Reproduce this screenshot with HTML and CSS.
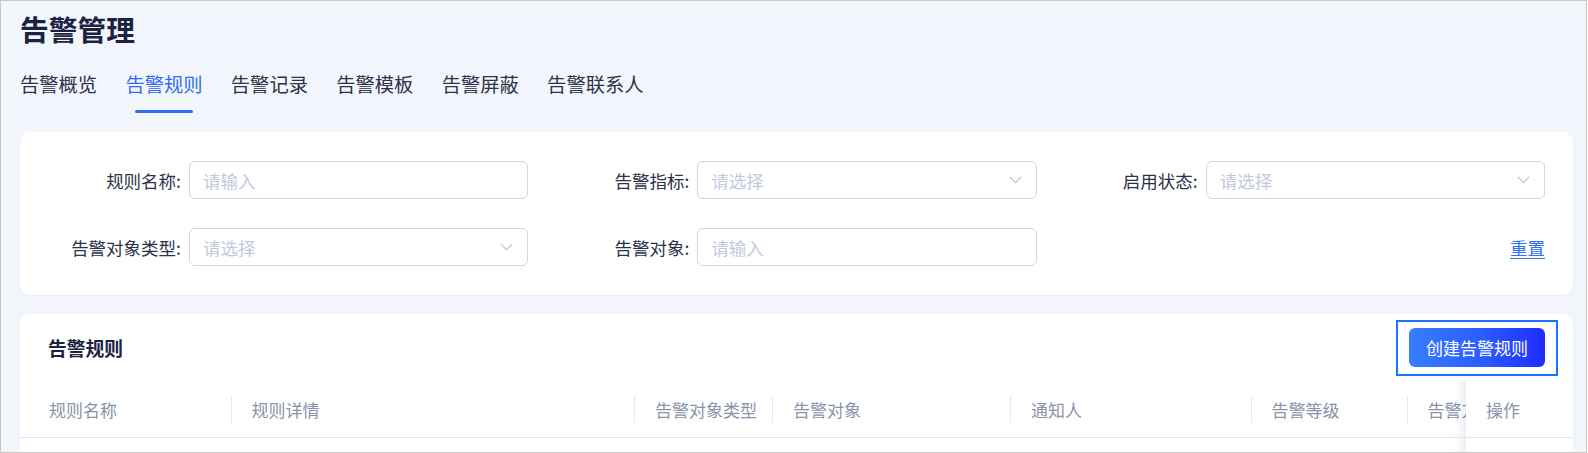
FILE: index.html
```html
<!DOCTYPE html>
<html lang="zh-CN">
<head>
<meta charset="utf-8">
<title>告警管理</title>
<link rel="stylesheet" href="styles.css">
</head>
<body>
<div class="app">
  <h1 class="page-title">告警管理</h1>

  <nav class="tabs">
    <span class="tab">告警概览</span>
    <span class="tab is-active">告警规则</span>
    <span class="tab">告警记录</span>
    <span class="tab">告警模板</span>
    <span class="tab">告警屏蔽</span>
    <span class="tab">告警联系人</span>
  </nav>

  <section class="card filter-card">
    <div class="field">
      <label class="field-label">规则名称:</label>
      <div class="control"><span class="placeholder">请输入</span></div>
    </div>
    <div class="field">
      <label class="field-label">告警指标:</label>
      <div class="control"><span class="placeholder">请选择</span>
        <svg class="chevron" width="13" height="8" viewBox="0 0 13 8"><polyline points="0.8,0.8 6.5,6.6 12.2,0.8" fill="none" stroke="currentColor" stroke-width="1.2"/></svg>
      </div>
    </div>
    <div class="field">
      <label class="field-label">启用状态:</label>
      <div class="control"><span class="placeholder">请选择</span>
        <svg class="chevron" width="13" height="8" viewBox="0 0 13 8"><polyline points="0.8,0.8 6.5,6.6 12.2,0.8" fill="none" stroke="currentColor" stroke-width="1.2"/></svg>
      </div>
    </div>
    <div class="field">
      <label class="field-label">告警对象类型:</label>
      <div class="control"><span class="placeholder">请选择</span>
        <svg class="chevron" width="13" height="8" viewBox="0 0 13 8"><polyline points="0.8,0.8 6.5,6.6 12.2,0.8" fill="none" stroke="currentColor" stroke-width="1.2"/></svg>
      </div>
    </div>
    <div class="field">
      <label class="field-label">告警对象:</label>
      <div class="control"><span class="placeholder">请输入</span></div>
    </div>
    <div class="field field-actions">
      <a class="link" href="#">重置</a>
    </div>
  </section>

  <section class="card table-card">
    <header class="card-head">
      <h2 class="card-title">告警规则</h2>
      <div class="focus-ring">
        <button class="btn-primary" type="button">创建告警规则</button>
      </div>
    </header>

    <div class="table-wrap">
      <table class="rules-table">
        <colgroup>
          <col style="width:211.5px">
          <col style="width:403.5px">
          <col style="width:138px">
          <col style="width:238px">
          <col style="width:240.5px">
          <col style="width:156px">
          <col style="width:58.5px">
          <col style="width:107px">
        </colgroup>
        <thead>
          <tr>
            <th>规则名称</th>
            <th>规则详情</th>
            <th>告警对象类型</th>
            <th>告警对象</th>
            <th>通知人</th>
            <th>告警等级</th>
            <th class="col-clipped">告警方式</th>
            <th class="col-fixed">操作</th>
          </tr>
        </thead>
        <tbody>
          <tr>
            <td></td><td></td><td></td><td></td><td></td><td></td><td></td>
            <td class="col-fixed"></td>
          </tr>
        </tbody>
      </table>
    </div>
  </section>
</div>
</body>
</html>
```

FILE: styles.css
```css
html, body {
  margin: 0;
  padding: 0;
  background: #ffffff;
}

body {
  font-family: "Noto Sans CJK SC", "Noto Sans", sans-serif;
  color: #2b3249;
}

.app {
  width: 1587px;
  height: 453px;
  box-sizing: border-box;
  border: 1px solid #c7c7c7;
  background: #f2f5fc;
  padding: 8px 13px 0 19px;
  overflow: hidden;
}

/* page heading */
.page-title {
  margin: 0;
  font-size: 28.75px;
  line-height: 40px;
  font-weight: 700;
  color: #1b2340;
}

/* tab strip */
.tabs {
  display: flex;
  gap: 28.3px;
  margin-top: 22px;
}

.tab {
  position: relative;
  font-size: 19.3px;
  line-height: 26px;
  padding-bottom: 16px;
  color: #2b3249;
  white-space: nowrap;
}

.tab.is-active {
  color: #2f6cf6;
}

.tab.is-active::after {
  content: "";
  position: absolute;
  left: 50%;
  bottom: 0;
  width: 58px;
  height: 3px;
  margin-left: -29px;
  border-radius: 2px;
  background: #2f6df7;
}

/* cards */
.card {
  background: #ffffff;
  border-radius: 10px;
  box-shadow: 0 1px 2px rgba(40, 60, 110, 0.05);
}

.filter-card {
  margin-top: 19px;
  padding: 29px 28px 29px 0;
  display: grid;
  grid-template-columns: repeat(3, 1fr);
  row-gap: 29px;
}

.field {
  display: flex;
  align-items: center;
  height: 38px;
}

.field-label {
  flex: none;
  width: 169px;
  box-sizing: border-box;
  padding-right: 8px;
  text-align: right;
  font-size: 17.5px;
  color: #2b3249;
  white-space: nowrap;
}

.control {
  flex: 1;
  height: 38px;
  box-sizing: border-box;
  border: 1px solid #cdd5e7;
  border-radius: 6px;
  padding: 0 14px 0 13px;
  display: flex;
  align-items: center;
  justify-content: space-between;
}

.placeholder {
  font-size: 17.5px;
  color: #c3cadd;
}

.chevron {
  display: block;
  color: #b9c1d5;
}

.field-actions {
  justify-content: flex-end;
}

.link {
  font-size: 17.5px;
  color: #3170f5;
  text-decoration: underline;
  text-underline-offset: 3px;
}

/* rules list */
.table-card {
  margin-top: 19px;
  height: 200px;
  border-radius: 10px 10px 0 0;
}

.card-head {
  display: flex;
  align-items: center;
  justify-content: space-between;
  padding: 6px 15px 0 28px;
}

.card-title {
  margin: 0;
  font-size: 18.75px;
  line-height: 26px;
  font-weight: 700;
  color: #1b2340;
}

.focus-ring {
  border: 2px solid #1a74ff;
  padding: 6px 11px 7px;
}

.btn-primary {
  display: block;
  width: 136px;
  height: 39px;
  border: none;
  border-radius: 6px;
  background: linear-gradient(90deg, #377fff 0%, #2a5cff 55%, #1f2cff 100%);
  color: #ffffff;
  font-family: inherit;
  font-size: 17px;
  padding: 0;
}

.table-wrap {
  margin-top: 5px;
  overflow: hidden;
}

.rules-table {
  table-layout: fixed;
  width: 1553px;
  border-collapse: separate;
  border-spacing: 0;
}

.rules-table th {
  position: relative;
  height: 56px;
  padding: 0 0 0 20px;
  text-align: left;
  font-size: 17px;
  font-weight: 400;
  color: #8a93ab;
  white-space: nowrap;
  overflow: hidden;
  text-overflow: clip;
  border-bottom: 1px solid #e3e6ef;
}

.rules-table th:first-child {
  padding-left: 29px;
}

.rules-table th::after {
  content: "";
  position: absolute;
  right: 0;
  top: 14.5px;
  width: 1px;
  height: 27px;
  background: #e3e7f0;
}

.rules-table th.col-clipped::after {
  display: none;
}

.rules-table td {
  height: 60px;
  padding: 0;
}

.rules-table .col-fixed {
  position: sticky;
  right: 0;
  background: #ffffff;
  overflow: visible;
}

.rules-table .col-fixed::after {
  display: none;
}

.rules-table .col-fixed::before {
  content: "";
  position: absolute;
  top: 0;
  bottom: 0;
  left: -13px;
  width: 13px;
  background: linear-gradient(to left, rgba(40, 60, 120, 0.08), rgba(40, 60, 120, 0));
}
```
